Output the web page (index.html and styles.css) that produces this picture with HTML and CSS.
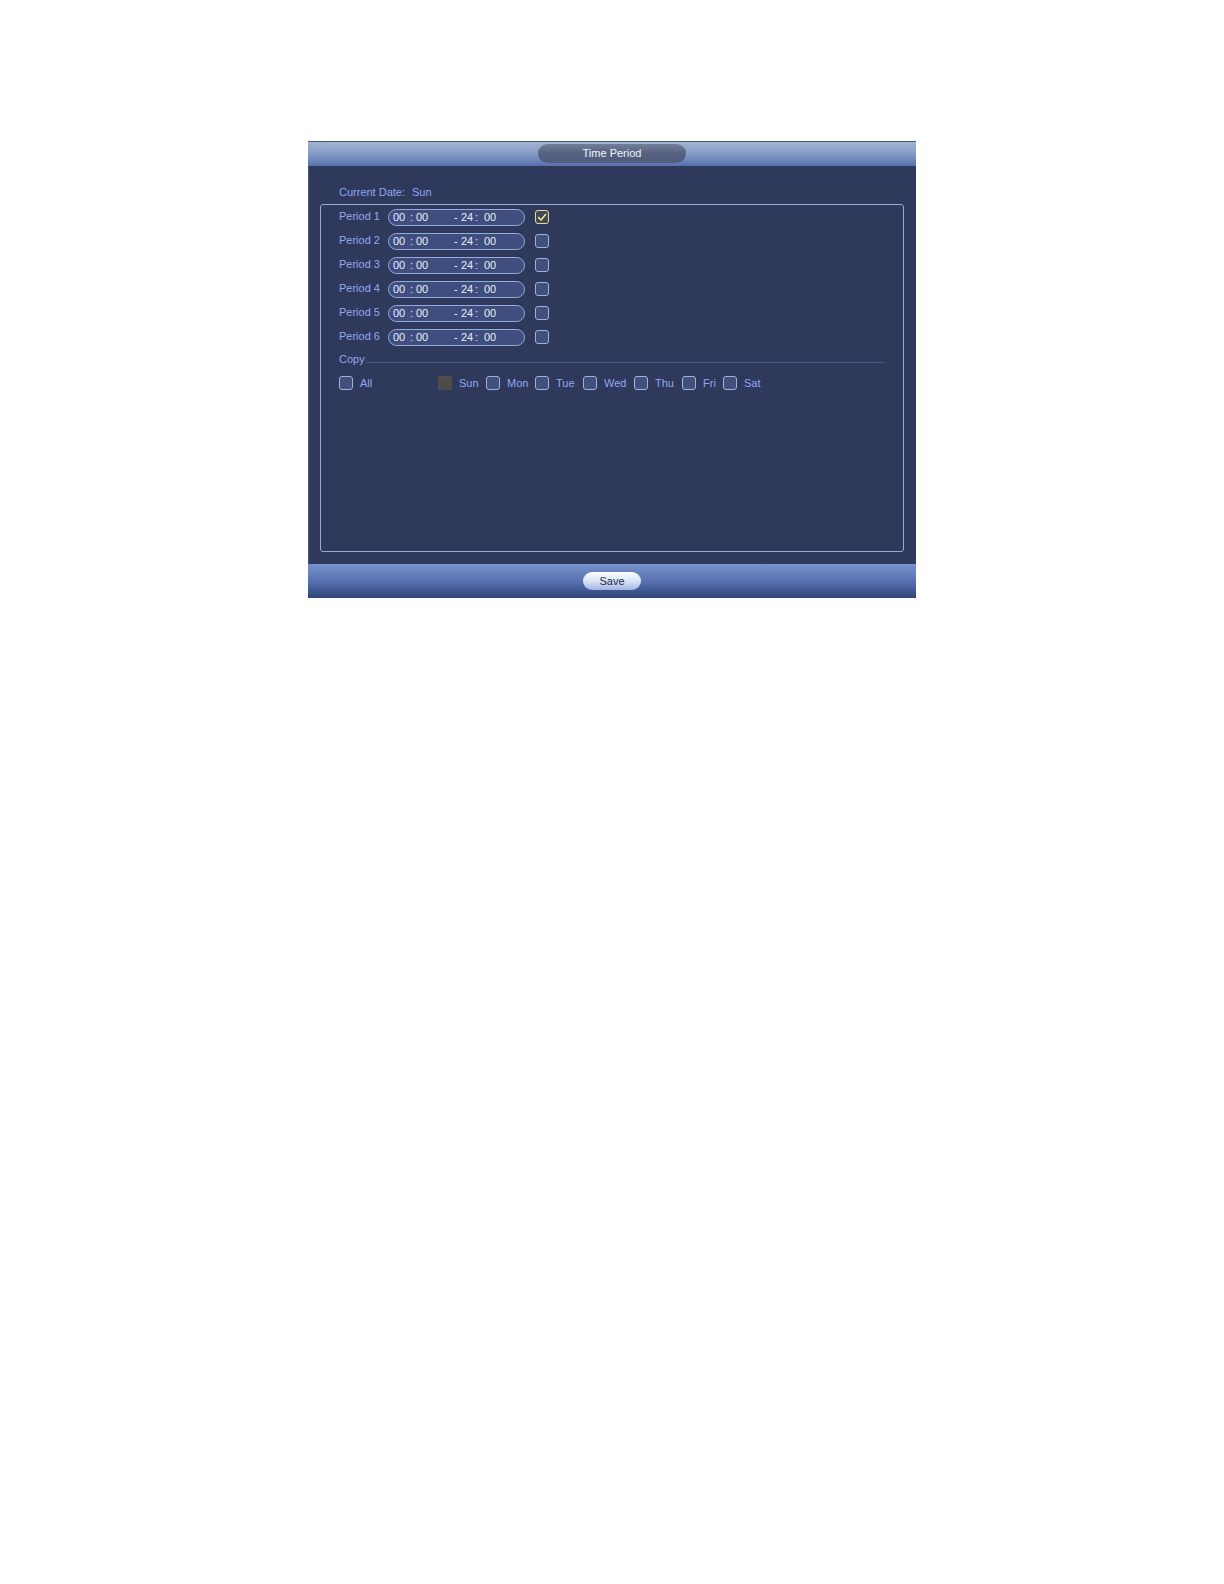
FILE: index.html
```html
<!DOCTYPE html>
<html lang="en">
<head>
<meta charset="utf-8">
<title>Time Period</title>
<link rel="stylesheet" href="styles.css">
</head>
<body>
<main class="page">
<form class="panel">
  <header class="panel-header"><h1 class="title">Time Period</h1></header>
  <div class="content">
    <p class="date"><span class="date-label">Current Date:</span><span>Sun</span></p>
    <section class="frame">
      <div class="periods" id="periods">
        <div class="period">
          <label class="period-label" for="p1">Period 1</label>
          <div class="range"><input class="seg" aria-label="Period 1 start hour" value="00"><span class="colon">:</span><input class="seg" aria-label="Period 1 start minute" value="00"><span class="dash">-</span><input class="seg" aria-label="Period 1 end hour" value="24"><span class="colon-end">:</span><input class="seg" aria-label="Period 1 end minute" value="00"></div>
          <span class="tick"><input class="box" type="checkbox" id="p1" checked><svg class="check" viewBox="0 0 14 14" aria-hidden="true"><path d="M3 7l3 3 5-6"/></svg></span>
        </div>
        <div class="period">
          <label class="period-label" for="p2">Period 2</label>
          <div class="range"><input class="seg" aria-label="Period 2 start hour" value="00"><span class="colon">:</span><input class="seg" aria-label="Period 2 start minute" value="00"><span class="dash">-</span><input class="seg" aria-label="Period 2 end hour" value="24"><span class="colon-end">:</span><input class="seg" aria-label="Period 2 end minute" value="00"></div>
          <span class="tick"><input class="box" type="checkbox" id="p2"></span>
        </div>
        <div class="period">
          <label class="period-label" for="p3">Period 3</label>
          <div class="range"><input class="seg" aria-label="Period 3 start hour" value="00"><span class="colon">:</span><input class="seg" aria-label="Period 3 start minute" value="00"><span class="dash">-</span><input class="seg" aria-label="Period 3 end hour" value="24"><span class="colon-end">:</span><input class="seg" aria-label="Period 3 end minute" value="00"></div>
          <span class="tick"><input class="box" type="checkbox" id="p3"></span>
        </div>
        <div class="period">
          <label class="period-label" for="p4">Period 4</label>
          <div class="range"><input class="seg" aria-label="Period 4 start hour" value="00"><span class="colon">:</span><input class="seg" aria-label="Period 4 start minute" value="00"><span class="dash">-</span><input class="seg" aria-label="Period 4 end hour" value="24"><span class="colon-end">:</span><input class="seg" aria-label="Period 4 end minute" value="00"></div>
          <span class="tick"><input class="box" type="checkbox" id="p4"></span>
        </div>
        <div class="period">
          <label class="period-label" for="p5">Period 5</label>
          <div class="range"><input class="seg" aria-label="Period 5 start hour" value="00"><span class="colon">:</span><input class="seg" aria-label="Period 5 start minute" value="00"><span class="dash">-</span><input class="seg" aria-label="Period 5 end hour" value="24"><span class="colon-end">:</span><input class="seg" aria-label="Period 5 end minute" value="00"></div>
          <span class="tick"><input class="box" type="checkbox" id="p5"></span>
        </div>
        <div class="period">
          <label class="period-label" for="p6">Period 6</label>
          <div class="range"><input class="seg" aria-label="Period 6 start hour" value="00"><span class="colon">:</span><input class="seg" aria-label="Period 6 start minute" value="00"><span class="dash">-</span><input class="seg" aria-label="Period 6 end hour" value="24"><span class="colon-end">:</span><input class="seg" aria-label="Period 6 end minute" value="00"></div>
          <span class="tick"><input class="box" type="checkbox" id="p6"></span>
        </div>
      </div>
      <h2 class="copy">Copy</h2>
      <div class="days">
        <label class="day"><input class="box" type="checkbox">All</label>
        <label class="day"><input class="box" type="checkbox" disabled>Sun</label>
        <label class="day"><input class="box" type="checkbox">Mon</label>
        <label class="day"><input class="box" type="checkbox">Tue</label>
        <label class="day"><input class="box" type="checkbox">Wed</label>
        <label class="day"><input class="box" type="checkbox">Thu</label>
        <label class="day"><input class="box" type="checkbox">Fri</label>
        <label class="day"><input class="box" type="checkbox">Sat</label>
      </div>
    </section>
  </div>
  <footer class="panel-footer"><button class="save" type="button">Save</button></footer>
</form>
</main>
</body>
</html>
```
FILE: styles.css
```css
* {
  box-sizing: border-box;
}

body {
  margin: 0;
  background: #fff;
  font: 11px/16px "Liberation Sans", Arial, sans-serif;
  color: #92a8f4;
}

.page {
  padding: 141px 16px 64px;
}

.panel {
  max-width: 608px;
  margin: 0 auto;
  background: #2f395b;
}

.panel-header {
  display: flex;
  justify-content: center;
  padding: 2px 0 3px;
  border-top: 1px solid #46566f;
  background: linear-gradient(#a3b4d2, #8198c4 55%, #5570ae);
}

.title {
  width: 148px;
  margin: 0;
  border-radius: 10px;
  background: linear-gradient(#717e9c, #56617f 50%, #505d80);
  color: #f4f6fc;
  font-size: 11px;
  font-weight: normal;
  line-height: 19px;
  text-align: center;
}

.content {
  padding: 18px 11px 12px;
  border-left: 1px solid #46557c;
  border-right: 1px solid #293a68;
}

.date {
  display: flex;
  margin: 0 0 4px 19px;
}

.date-label {
  width: 73px;
}

.frame {
  min-height: 348px;
  padding: 4px 18px;
  border: 1px solid #98a8d4;
  border-radius: 3px;
}

.periods {
  display: grid;
  gap: 7px;
}

.period {
  display: flex;
  align-items: center;
  height: 17px;
}

.period-label {
  align-self: flex-start;
  width: 49px;
  line-height: 15px;
}

.range {
  display: flex;
  align-items: center;
  width: 137px;
  height: 17px;
  margin-right: 10px;
  padding: 0 4px;
  border: 1px solid #97aadf;
  border-radius: 9px;
  background: #3f4e7e;
  color: #e8edfa;
  line-height: 15px;
}

.seg {
  width: 14px;
  height: 15px;
  padding: 0;
  border: 0;
  background: none;
  color: inherit;
  font: inherit;
}

.colon {
  width: 9px;
  text-align: center;
}

.dash {
  width: 31px;
  padding-left: 24px;
}

.colon-end {
  width: 9px;
}

.box {
  appearance: none;
  flex: none;
  display: block;
  width: 14px;
  height: 14px;
  margin: 0;
  border: 1px solid #9fb2e2;
  border-radius: 3px;
  background: #40507a;
}

.box:checked {
  border-color: #e8df86;
  background: #45485c;
}

.box:disabled {
  border-color: #525148;
  border-radius: 1px;
  background: #4c4c49;
}

.tick {
  display: grid;
  padding-bottom: 1px;
}

.tick > * {
  grid-area: 1 / 1;
}

.check {
  display: none;
  width: 14px;
  height: 14px;
  fill: none;
  stroke: #f2eb9b;
  stroke-width: 1.5;
  pointer-events: none;
}

.box:checked + .check {
  display: block;
}

.copy {
  display: flex;
  align-items: center;
  gap: 1px;
  margin: 5px 0 9px;
  font-size: 11px;
  font-weight: normal;
}

.copy::after {
  content: "";
  flex: 1;
  height: 1px;
  margin-top: 6px;
  background: #47547e;
}

.days {
  display: grid;
  grid-template-columns: 99px 48px 49px 48px 51px 48px 41px auto;
}

.day {
  display: flex;
  align-items: center;
  gap: 7px;
  line-height: 14px;
}

.panel-footer {
  display: flex;
  justify-content: center;
  padding: 8px 0;
  background: linear-gradient(#7892cb, #5872b2 50%, #2d4379);
}

.save {
  width: 58px;
  height: 18px;
  padding: 0;
  border: 0;
  border-radius: 9px;
  background: linear-gradient(#fafcff, #dbe4f8 50%, #9fb2e0);
  color: #1f2844;
  font: inherit;
}
```
